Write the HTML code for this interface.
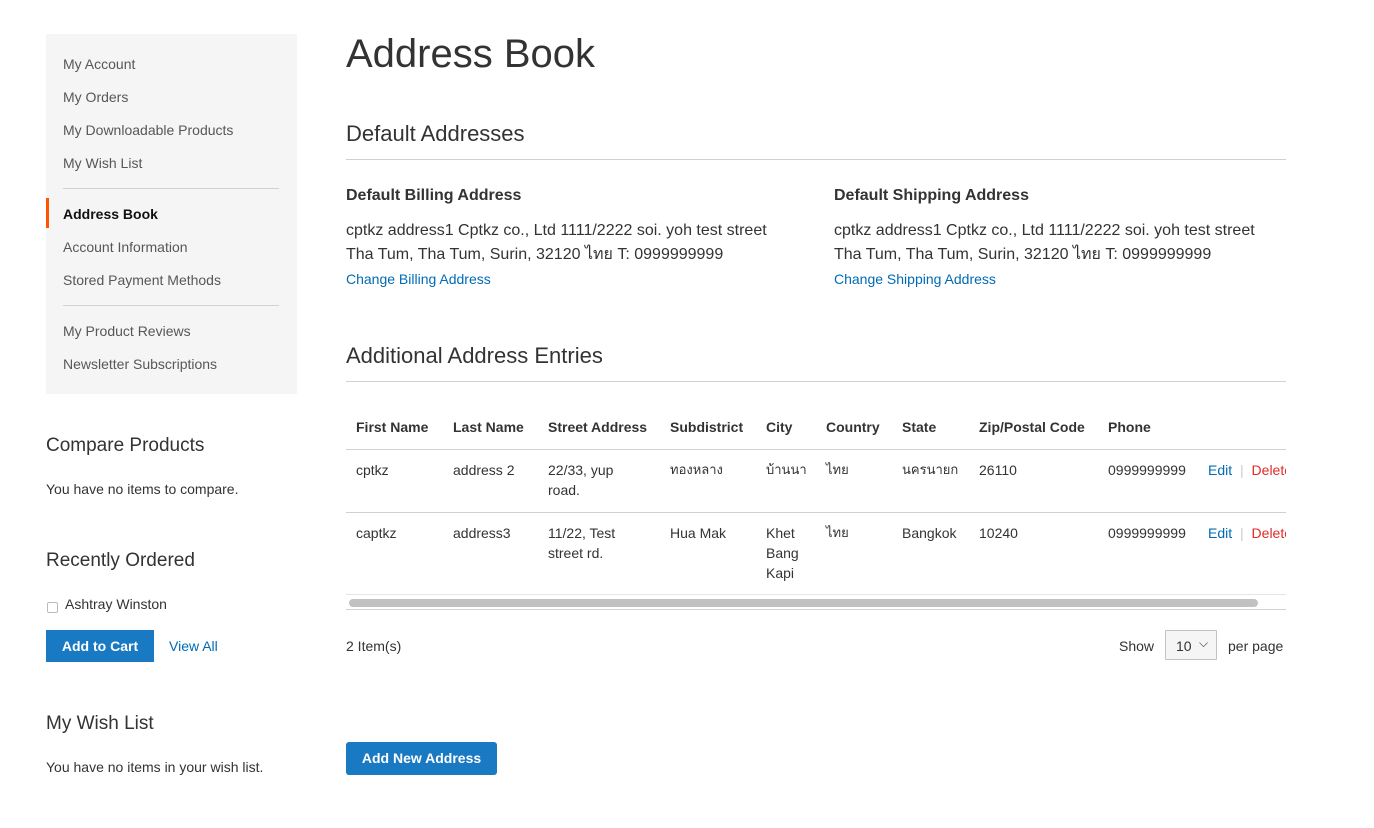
<!DOCTYPE html>
<html><head><meta charset="utf-8"><style>
body{margin:0;width:1374px;height:828px;background:#fff;font-family:"Liberation Sans","Noto Sans CJK SC",sans-serif;color:#333;font-size:14px;position:relative;overflow:hidden}
.a{position:absolute;white-space:nowrap}
.nav{position:absolute;left:46px;top:34px;width:251px;height:360px;background:#f5f5f5}
.nav .i{position:absolute;left:17px;color:#575757;font-size:14px}
.hr{position:absolute;height:1px;background:#d1d1d1}
.blue{color:#006bb4}
.h2{font-size:22px;font-weight:300;color:#333}
.btn{position:absolute;background:#1979c3;color:#fff;font-weight:bold;font-size:14px;text-align:center;border-radius:0}
.t{position:absolute;font-size:14px;line-height:20px;white-space:nowrap}
</style></head><body>
<div class="nav">
<div class="i" style="top:22px">My Account</div>
<div class="i" style="top:55px">My Orders</div>
<div class="i" style="top:88px">My Downloadable Products</div>
<div class="i" style="top:121px">My Wish List</div>
<div class="hr" style="left:17px;top:154px;width:216px"></div>
<div style="position:absolute;left:0;top:164px;width:3px;height:30px;background:#ff5501"></div>
<div class="i" style="top:172px;color:#111;font-weight:bold">Address Book</div>
<div class="i" style="top:205px">Account Information</div>
<div class="i" style="top:238px">Stored Payment Methods</div>
<div class="hr" style="left:17px;top:271px;width:216px"></div>
<div class="i" style="top:289px">My Product Reviews</div>
<div class="i" style="top:322px">Newsletter Subscriptions</div>
</div>
<div class="a h2" style="left:46px;top:435px;font-size:19px">Compare Products</div>
<div class="a" style="left:46px;top:481px">You have no items to compare.</div>
<div class="a h2" style="left:46px;top:550px;font-size:19px">Recently Ordered</div>
<div style="position:absolute;left:47px;top:602px;width:9px;height:9px;border:1px solid #bbb;border-radius:2px"></div>
<div class="a" style="left:65px;top:596px">Ashtray Winston</div>
<div class="btn" style="left:46px;top:630px;width:108px;height:32px;line-height:32px">Add to Cart</div>
<div class="a blue" style="left:169px;top:638px">View All</div>
<div class="a h2" style="left:46px;top:713px;font-size:19px">My Wish List</div>
<div class="a" style="left:46px;top:759px">You have no items in your wish list.</div>

<div class="a" style="left:346px;top:32px;font-size:40px;font-weight:300;color:#333">Address Book</div>
<div class="a h2" style="left:346px;top:121px">Default Addresses</div>
<div class="hr" style="left:346px;top:159px;width:940px"></div>
<div class="a" style="left:346px;top:187px;font-size:16px;font-weight:bold">Default Billing Address</div>
<div class="a" style="left:346px;top:219px;font-size:16px;line-height:24px">cptkz address1 Cptkz co., Ltd 1111/2222 soi. yoh test street<br>Tha Tum, Tha Tum, Surin, 32120 ไทย T: 0999999999</div>
<div class="a blue" style="left:346px;top:271px">Change Billing Address</div>
<div class="a" style="left:834px;top:187px;font-size:16px;font-weight:bold">Default Shipping Address</div>
<div class="a" style="left:834px;top:219px;font-size:16px;line-height:24px">cptkz address1 Cptkz co., Ltd 1111/2222 soi. yoh test street<br>Tha Tum, Tha Tum, Surin, 32120 ไทย T: 0999999999</div>
<div class="a blue" style="left:834px;top:271px">Change Shipping Address</div>
<div class="a h2" style="left:346px;top:343px">Additional Address Entries</div>
<div class="hr" style="left:346px;top:381px;width:940px"></div>

<div style="position:absolute;left:346px;top:400px;width:940px;height:212px;overflow:hidden">
<div class="t" style="left:10px;top:17px;font-weight:bold">First Name</div>
<div class="t" style="left:107px;top:17px;font-weight:bold">Last Name</div>
<div class="t" style="left:202px;top:17px;font-weight:bold">Street Address</div>
<div class="t" style="left:324px;top:17px;font-weight:bold">Subdistrict</div>
<div class="t" style="left:420px;top:17px;font-weight:bold">City</div>
<div class="t" style="left:480px;top:17px;font-weight:bold">Country</div>
<div class="t" style="left:556px;top:17px;font-weight:bold">State</div>
<div class="t" style="left:633px;top:17px;font-weight:bold">Zip/Postal Code</div>
<div class="t" style="left:762px;top:17px;font-weight:bold">Phone</div>
<div class="hr" style="left:0;top:49px;width:940px"></div>
<div class="t" style="left:10px;top:60px">cptkz</div>
<div class="t" style="left:107px;top:60px">address 2</div>
<div class="t" style="left:202px;top:60px">22/33, yup<br>road.</div>
<div class="t" style="left:324px;top:60px;font-size:13px">ทองหลาง</div>
<div class="t" style="left:420px;top:60px;font-size:13px">บ้านนา</div>
<div class="t" style="left:480px;top:60px;font-size:13px">ไทย</div>
<div class="t" style="left:556px;top:60px;font-size:13px">นครนายก</div>
<div class="t" style="left:633px;top:60px">26110</div>
<div class="t" style="left:762px;top:60px">0999999999</div>
<div class="t blue" style="left:862px;top:60px">Edit <span style="color:#ccc;margin:0 4px">|</span> <span style="color:#e02b27">Delete</span></div>
<div class="hr" style="left:0;top:112px;width:940px"></div>
<div class="t" style="left:10px;top:123px">captkz</div>
<div class="t" style="left:107px;top:123px">address3</div>
<div class="t" style="left:202px;top:123px">11/22, Test<br>street rd.</div>
<div class="t" style="left:324px;top:123px">Hua Mak</div>
<div class="t" style="left:420px;top:123px">Khet<br>Bang<br>Kapi</div>
<div class="t" style="left:480px;top:123px;font-size:13px">ไทย</div>
<div class="t" style="left:556px;top:123px">Bangkok</div>
<div class="t" style="left:633px;top:123px">10240</div>
<div class="t" style="left:762px;top:123px">0999999999</div>
<div class="t blue" style="left:862px;top:123px">Edit <span style="color:#ccc;margin:0 4px">|</span> <span style="color:#e02b27">Delete</span></div>
<div class="hr" style="left:0;top:194px;width:940px;background:#e5e5e5"></div>
<div style="position:absolute;left:3px;top:199px;width:909px;height:8px;border-radius:4px;background:#c1c1c1"></div>
<div class="hr" style="left:0;top:209px;width:940px;background:#d1d1d1"></div>
</div>

<div class="a" style="left:346px;top:638px">2 Item(s)</div>
<div class="a" style="left:1119px;top:638px">Show</div>
<div style="position:absolute;left:1165px;top:630px;width:52px;height:30px;border:1px solid #c2c2c2;background:#f5f5f5;border-radius:1px;box-sizing:border-box"><span style="position:absolute;left:10px;top:7px">10</span><span style="position:absolute;left:33px;top:5px;font-size:12px">⌵</span></div>
<div class="a" style="left:1228px;top:638px">per page</div>
<div class="btn" style="left:346px;top:742px;width:151px;height:33px;line-height:33px;border-radius:3px">Add New Address</div>
</body></html>
